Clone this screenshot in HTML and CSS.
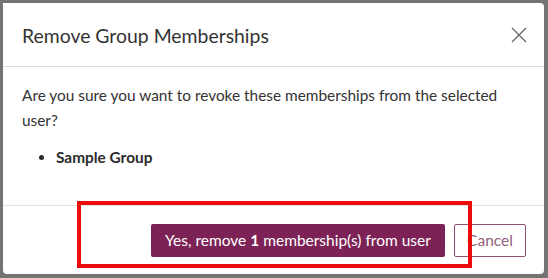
FILE: index.html
```html
<!DOCTYPE html>
<html lang="en">
<head>
    <meta charset="UTF-8">
    <meta name="viewport" content="width=device-width, initial-scale=1.0">
    <title>Remove Group Memberships</title>
    <link rel="stylesheet" href="styles.css">
</head>
<body>
    <div class="modal">
        <div class="modal-header">
            <h1>Remove Group Memberships</h1>
            <button class="close" type="button" aria-label="Close">
                <svg width="16" height="16" viewBox="0 0 16 16">
                    <path d="M1 1 L15 15 M15 1 L1 15" stroke="#6b6b6b" stroke-width="1.4" fill="none"/>
                </svg>
            </button>
        </div>
        <div class="modal-body">
            <p>Are you sure you want to revoke these memberships from the selected user?</p>
            <ul>
                <li>Sample Group</li>
            </ul>
        </div>
        <div class="modal-footer">
            <button class="btn-primary" type="button">Yes, remove <b>1</b> membership(s) from user</button>
            <button class="btn-cancel" type="button">Cancel</button>
        </div>
    </div>
    <div class="highlight"></div>
</body>
</html>
```

FILE: styles.css
```css
body {
    margin: 0;
    background-color: #747474;
    font-family: Lato, "Open Sans", sans-serif;
    color: #333;
    height: 278px;
    overflow: hidden;
}
.modal {
    position: relative;
    margin: 3px 0 0 3px;
    width: 541px;
    height: 271px;
    background: #fff;
    border-radius: 0 4px 4px 4px;
    box-sizing: border-box;
    display: flex;
    flex-direction: column;
}
.modal-header {
    height: 64px;
    display: flex;
    align-items: center;
    justify-content: space-between;
    padding: 0 17px 0 19px;
    border-bottom: 1px solid #dedede;
    box-sizing: border-box;
}
.modal-header h1 {
    margin: 0;
    font-size: 19.4px;
    font-weight: 400;
    color: #333;
    padding-top: 2px;
}
.close {
    background: none;
    border: none;
    padding: 0;
    width: 16px;
    height: 16px;
    cursor: pointer;
}
.modal-body {
    flex: 1;
    padding: 16px 19px 0 19px;
    font-size: 15.4px;
    line-height: 25px;
}
.modal-body p {
    margin: 0 0 12px 0;
    padding-right: 20px;
}
.modal-body ul {
    margin: 0;
    padding-left: 34px;
}
.modal-body li {
    font-weight: 700;
    color: #2b2b2b;
}
.modal-footer {
    height: 69px;
    border-top: 1px solid #e4e4e4;
    box-sizing: border-box;
    display: flex;
    justify-content: flex-end;
    align-items: center;
    gap: 9px;
    padding: 0 18px 0 0;
}
.modal-footer button {
    height: 33px;
    font-family: inherit;
    font-size: 15.5px;
    border-radius: 2px;
    cursor: pointer;
}
.btn-primary {
    background-color: #7c2256;
    color: #fff;
    border: none;
    width: 294px;
    padding: 0;
}
.btn-cancel {
    background: #fff;
    color: #93607f;
    border: 1px solid #8e4f74;
    width: 72px;
    padding: 0;
}
.highlight {
    position: absolute;
    left: 77px;
    top: 201px;
    width: 395px;
    height: 67px;
    border: 4px solid #ec0b0b;
    box-sizing: border-box;
}
```
